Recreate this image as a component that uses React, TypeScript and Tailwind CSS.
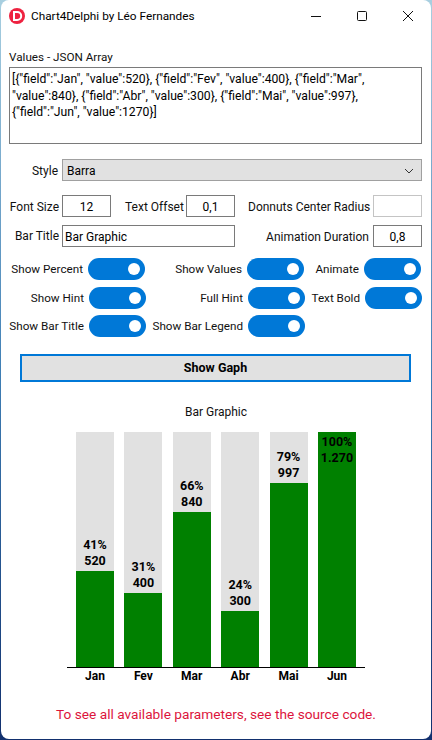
const font = "font-['Roboto','Noto_Sans',sans-serif]"

function Toggle() {
  return (
    <div className="flex h-[22px] w-[57px] shrink-0 items-center justify-end rounded-[11px] bg-[#0078d7] pr-[5px]">
      <div className="h-3 w-3 rounded-full bg-white" />
    </div>
  )
}

function Opt({ label, w }: { label: string; w: string }) {
  return (
    <div className={`flex items-center justify-end gap-[5px] ${w}`}>
      <span className="whitespace-nowrap text-[11.7px]">{label}</span>
      <Toggle />
    </div>
  )
}

const bars = [
  { name: "Jan", pct: "41%", val: "520", h: 96 },
  { name: "Fev", pct: "31%", val: "400", h: 74 },
  { name: "Mar", pct: "66%", val: "840", h: 155 },
  { name: "Abr", pct: "24%", val: "300", h: 56 },
  { name: "Mai", pct: "79%", val: "997", h: 184 },
  { name: "Jun", pct: "100%", val: "1.270", h: 235 },
]

export default function App() {
  return (
    <div className={`${font} h-[740px] w-[432px] overflow-hidden bg-linear-to-b from-[#a8cfe0] via-[#3f7fb5] to-[#12306e] text-[12px] leading-4 text-[#111]`}>
      <div className="ml-[1px] h-[739px] w-[430px] rounded-[8px] bg-white">
        <div className="flex h-[31px] items-center pl-[8px]">
          <svg width="16" height="16" viewBox="0 0 16 16">
            <circle cx="8" cy="8" r="8" fill="#ee2240" />
            <path d="M5 4h3.2a4 4 0 0 1 0 8H5z" fill="none" stroke="#fff" strokeWidth="2" />
          </svg>
          <span className="ml-[6px] text-[11.8px] text-black">Chart4Delphi by Léo Fernandes</span>
          <div className="ml-auto flex items-center">
            <svg width="46" height="30" viewBox="0 0 46 30"><path d="M18 15.5h10" stroke="#111" /></svg>
            <svg width="46" height="30" viewBox="0 0 46 30"><rect x="18.5" y="10.5" width="9" height="9" rx="1" fill="none" stroke="#111" /></svg>
            <svg width="46" height="30" viewBox="0 0 46 30"><path d="M18 10l10 10M28 10l-10 10" stroke="#111" /></svg>
          </div>
        </div>

        <div className="pl-[7px] pr-[9px]">
          <div className="mt-[18px] pl-[1px] text-[11.7px]">Values - JSON Array</div>
          <div className="ml-[1px] mt-[2px] h-[77px] border border-[#7a7a7a] px-[2px] pt-[3px] text-[12.2px] leading-[16.5px] text-black">
            {'[{"field":"Jan", "value":520}, {"field":"Fev", "value":400}, {"field":"Mar", "value":840}, {"field":"Abr", "value":300}, {"field":"Mai", "value":997}, {"field":"Jun", "value":1270}]'}
          </div>

          <div className="mt-[15px] flex items-center">
            <span className="w-[51px] shrink-0 pr-[1px] pt-[1px] text-right">Style</span>
            <div className="ml-[3px] flex h-[22px] flex-1 items-center justify-between border border-[#a0a0a0] bg-[#e1e1e1] pl-[4px] pr-[6px] pt-[2px] text-black">
              Barra
              <svg width="12" height="12" viewBox="0 0 12 12"><path d="M2 4l4 4 4-4" fill="none" stroke="#333" /></svg>
            </div>
          </div>

          <div className="mt-[14px] flex items-center">
            <span className="w-[51px] shrink-0 whitespace-nowrap pt-[1px] text-right">Font Size</span>
            <div className="ml-[3px] flex h-[22px] w-[49px] shrink-0 items-center justify-center border border-[#7a7a7a] pt-[1px] text-black">12</div>
            <span className="ml-[14px] w-[57px] shrink-0 whitespace-nowrap pt-[1px]">Text Offset</span>
            <div className="ml-[4px] flex h-[22px] w-[49px] shrink-0 items-center justify-center border border-[#7a7a7a] pt-[1px] text-black">0,1</div>
            <span className="ml-[13px] w-[122px] shrink-0 whitespace-nowrap pt-[1px] text-right">Donnuts Center Radius</span>
            <div className="ml-[3px] h-[22px] w-[49px] shrink-0 border border-[#c4c4c4]" />
          </div>

          <div className="mt-[8px] flex items-center">
            <span className="w-[51px] shrink-0 text-right">Bar Title</span>
            <div className="ml-[3px] flex h-[22px] w-[173px] shrink-0 items-center border border-[#7a7a7a] pl-[2px] pt-[2px] text-black">Bar Graphic</div>
            <span className="ml-[22px] w-[112px] shrink-0 whitespace-nowrap pt-[1px] text-right">Animation Duration</span>
            <div className="ml-[4px] flex h-[22px] w-[49px] shrink-0 items-center justify-center border border-[#7a7a7a] pt-[1px] text-black">0,8</div>
          </div>
        </div>

        <div className="mt-[11px] flex h-[22px]">
          <Opt label="Show Percent" w="w-[144px]" />
          <Opt label="Show Values" w="w-[159px]" />
          <Opt label="Animate" w="w-[117px]" />
        </div>
        <div className="mt-[7px] flex h-[22px] pl-[1px]">
          <Opt label="Show Hint" w="w-[144px]" />
          <Opt label="Full Hint" w="w-[159px]" />
          <Opt label="Text Bold" w="w-[117px]" />
        </div>
        <div className="mt-[6px] flex h-[22px] pl-[1px]">
          <Opt label="Show Bar Title" w="w-[144px]" />
          <Opt label="Show Bar Legend" w="w-[159px]" />
        </div>

        <div className="ml-[19px] mt-[17px] flex h-[28px] w-[391px] items-center justify-center border-2 border-[#0078d7] bg-[#e1e1e1] text-[12.5px] font-bold text-black">
          Show Gaph
        </div>

        <div className="mt-[22px] text-center">Bar Graphic</div>

        <div className="ml-[66px] mt-[12px] flex h-[236px] w-[298px] gap-[10.4px] border-b border-black px-[9px]">
          {bars.map(b => (
            <div key={b.name} className="flex h-[235px] w-[38px] flex-col justify-end bg-[#e1e1e1] text-center text-[12.5px] font-bold text-black">
              {b.h === 235 ? (
                <div className="h-[235px] bg-[#008000] pt-[2px]">{b.pct}<br />{b.val}</div>
              ) : (
                <>
                  <div className="pb-[2px]">{b.pct}<br />{b.val}</div>
                  <div className="bg-[#008000]" style={{ height: b.h }} />
                </>
              )}
            </div>
          ))}
        </div>
        <div className="ml-[66px] flex w-[298px] gap-[10.4px] px-[9px] font-bold text-black">
          {bars.map(b => (
            <div key={b.name} className="w-[38px] text-center">{b.name}</div>
          ))}
        </div>

        <div className="mt-[22px] text-center text-[13.7px] text-[#dc143c]">
          To see all available parameters, see the source code.
        </div>
      </div>
    </div>
  )
}
